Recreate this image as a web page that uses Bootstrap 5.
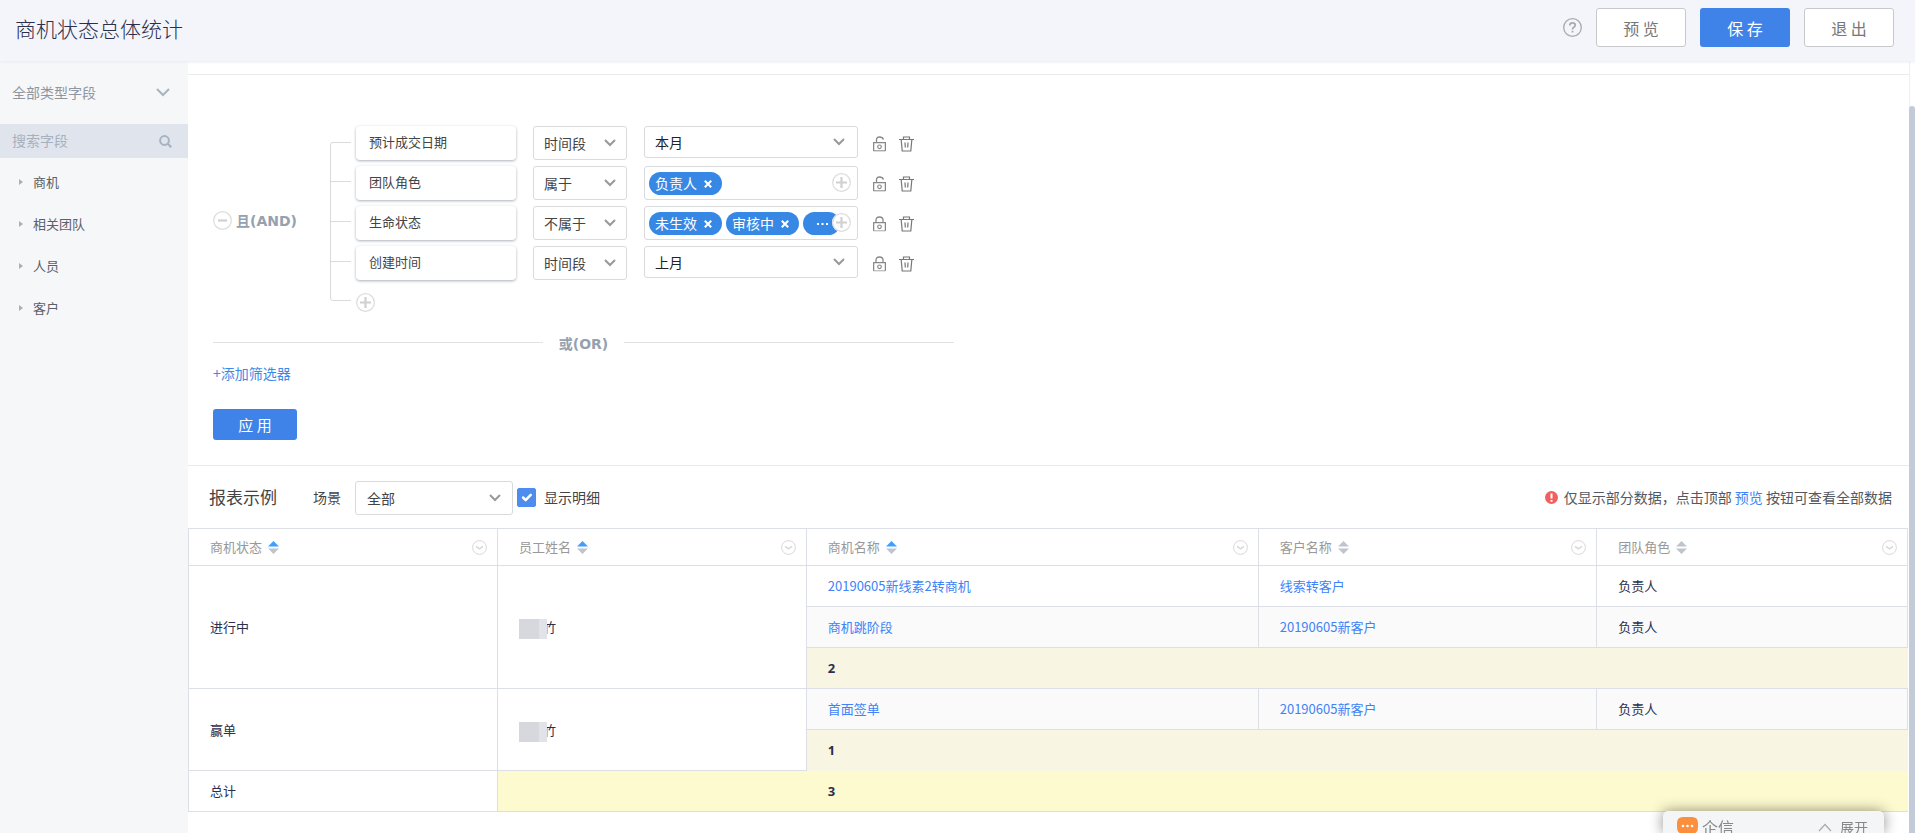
<!DOCTYPE html>
<html lang="zh-CN">
<head>
<meta charset="utf-8">
<meta name="viewport" content="width=device-width, initial-scale=1">
<title>商机状态总体统计</title>
<link rel="stylesheet" href="https://cdn.jsdelivr.net/npm/bootstrap@5.3.0/dist/css/bootstrap.min.css">
<style>
body{font-family:"Noto Sans CJK SC",sans-serif;font-size:14px;line-height:20px;color:#444;font-weight:400}
.latin-bold{font-family:"DejaVu Sans","Noto Sans CJK SC",sans-serif;font-weight:700;font-size:14px;color:#95a1af}
.app-head{height:61px;background:#f4f5fa;padding:8px 21px 14px 15px;gap:14px;box-shadow:0 1px 3px #e9ebf0;z-index:2}
.app-head h1{font-size:21px;line-height:30px;color:#2b2f4e;font-weight:300}
.btn-top{width:90px;height:39px;border-radius:3px;padding:0;font-size:16px;line-height:24px;background:#fff;border:1px solid #c8c9cc;color:#777}
.btn-save,.btn-apply{background:#4083e8;border:0;color:#fff}
.btn-apply{width:84px;height:31px;border-radius:3px;padding:0;font-size:15px;line-height:20px;margin-left:25px}
.icon-btn{background:none;border:0;padding:0;line-height:0;display:block}
.side{width:188px;background:#f6f7f9;flex:none}
.side-type{height:63px;padding:0 17px 2px 12px;color:#9095a0}
.side-search{height:34px;background:#e0e5ed;padding:0 16px 0 12px}
.side-search input{background:none;border:0;padding:0 0 2px;width:100%;outline:0;font-size:14px}
.side-search input::placeholder{color:#a7b0bd;opacity:1}
.side-list{padding-top:3px}
.side-list a{height:42px;gap:10px;padding-left:19px;font-size:13px;color:#5c6069;text-decoration:none}
.top-gap{height:14px;border-bottom:1px solid #ebecee}
.rules{padding:50px 0 0 25px}
.rule-and{width:117px;padding-top:4px}
.tree{width:26px;height:159px;margin-top:17px;align-self:flex-start}
.rule-row{height:40px}
.field-box{width:160px;height:34px;border-radius:4px;padding:0 13px;font-size:13px;line-height:32px;margin-top:1px;box-shadow:0 1px 3px #aab0b8}
.sel{border:1px solid #d9dadc;border-radius:3px;background-color:#fff;background-repeat:no-repeat;background-image:url("data:image/svg+xml,%3Csvg xmlns='http://www.w3.org/2000/svg' width='14' height='10'%3E%3Cpath d='M2 2l5 5 5-5' fill='none' stroke='%23999' stroke-width='2'/%3E%3C/svg%3E");appearance:none;height:34px;padding:0 10px;font-size:14px;color:#444}
.sel-op{width:94px;background-position:right 9px center;margin:1px 17px 0}
.sel-val{width:214px;height:32px;background-position:right 11px center;color:#222;margin-top:1px}
.tagbox{width:214px;height:34px;border:1px solid #d9dadc;border-radius:3px;padding:5px 4px;gap:4px;margin-top:1px}
.chip{height:23px;border-radius:12px;background:#3788e5;color:#fff;padding:0 10px 0 6px;gap:7px;line-height:23px;white-space:nowrap;flex:none}
.chip-more{padding:0 12px 0 14px}
.tagbox .icon-btn{position:absolute;right:6px;top:6px;background:#fff;border-radius:50%}
.acts{gap:13px;padding:11px 0 0 15px}
.or-row{width:741px;margin:22px 0 0 25px;gap:16px;height:20px}
.or-row hr{margin:0 0 4px;flex:1;border-color:#e0e2e4;opacity:1}
.add-link{color:#3c8be6;text-decoration:none;margin:9px 0 26px 25px}
.sample-bar{border-top:1px solid #e8e9eb;margin-top:25px;padding:0 17px 0 21px;height:63px}
.sample-bar h2{font-size:17px;line-height:24px;font-weight:400;width:104px}
.sel-scene{width:158px;background-position:right 10px center;margin:2px 4px 0 14px;padding-left:11px}
.sample-bar .tick{width:19px;height:19px;margin:0 8px 0 0;border-radius:2px}
.tick:checked{background-color:#4e8cee;border-color:#4e8cee}
.hint{color:#545861}
.hint a,.grid a{color:#4083f8;text-decoration:none}
.grid{margin:0;table-layout:fixed;font-size:13px;line-height:20px;width:calc(100% - 1px);color:#2b2f4e;border-collapse:collapse}
.grid th,.grid td{height:41px;padding:0 10px 0 21px;border:1px solid #dcdfe6;vertical-align:middle;font-weight:400}
.grid th{height:37px;color:#999}
.grid .alt td.shade{background:#fafafb}
.grid td.sub,.grid td.total{font-weight:700;font-family:"Noto Sans","Noto Sans CJK SC",sans-serif}
.grid td.sub{background:#f9f5e3;border-bottom-color:#f9f5e3;border-right-color:#f9f5e3}
.grid td.sub.mid{border-bottom-color:#dcdfe6}
.grid td.total{background:#fefacf;border-top-color:#fefacf;border-right-color:#fefacf}
.sorter{margin-left:6px}
.veil{width:20px;height:20px;background:#d7d8de;box-shadow:8px 0 0 #e2e3e8;margin:4px 4px 0 0}
.track{width:6px;flex:none;border-left:1px solid #eceef1;padding-top:45px}
.thumb{height:100%;background:#c3cad8;border-radius:3px 3px 0 0;margin-left:-1px}
.chatbar{position:fixed;right:31px;bottom:0;width:221px;height:22px;background:#f4f5f7;border-radius:5px 5px 0 0;box-shadow:0 0 14px rgba(0,0,0,.45);padding:6px 16px 0 14px;color:#888}
.chatbar span{line-height:20px}
</style>
<script src="https://cdn.jsdelivr.net/npm/bootstrap@5.3.0/dist/js/bootstrap.bundle.min.js"></script>
</head>
<body class="vh-100 overflow-hidden d-flex flex-column">
<svg class="d-none">
<symbol id="plus" viewBox="0 0 19 19"><circle cx="9.500" cy="9.500" r="8.800" fill="none" stroke="#dcdcdc" stroke-width="1.200"/><path d="M9.500 4v11M4 9.500h11" stroke="#d0d0d0" stroke-width="2.200"/></symbol>
<symbol id="minus" viewBox="0 0 19 19"><circle cx="9.500" cy="9.500" r="8.800" fill="none" stroke="#dcdcdc" stroke-width="1.200"/><path d="M5 9.500h9" stroke="#d0d0d0" stroke-width="2.200"/></symbol>
<symbol id="unlock" viewBox="0 0 13 16"><path d="M.6 15V6.600h11.800V15M3.500 6.600V3.800Q3.500 1 6.500 1Q9.500 1 10.500 3.400" fill="none" stroke="#888" stroke-width="1.300"/><path d="M.6 14.800h11.800" stroke="#888"/><circle cx="6.500" cy="10.800" r="1.800" fill="none" stroke="#888" stroke-width="1.200"/></symbol>
<symbol id="lock" viewBox="0 0 13 16"><path d="M.6 15V6.600h11.800V15M3 6.600V4.200Q3 1 6.500 1Q10 1 10 4.200V6.600" fill="none" stroke="#888" stroke-width="1.300"/><path d="M.6 14.800h11.800" stroke="#aaa"/><circle cx="6.500" cy="10.800" r="1.800" fill="none" stroke="#888" stroke-width="1.200"/></symbol>
<symbol id="trash" viewBox="0 0 15 16"><path d="M0 3.500h15M4.500 3V1h6v2M2.200 4l1 11h8.600l1-11M6 6.500l.3 5M9 6.500l-.3 5" fill="none" stroke="#777" stroke-width="1.200"/></symbol>
<symbol id="drop" viewBox="0 0 15 15"><circle cx="7.500" cy="7.500" r="6.900" fill="none" stroke="#d8d8d8"/><path d="M4 6.300l3.500 2.500L11 6.300" fill="none" stroke="#d8d8d8" stroke-width="1.500"/></symbol>
<symbol id="sort-on" viewBox="0 0 11 13"><path d="M0 5.500L5.500 0 11 5.500z" fill="#409eff"/><path d="M0 7.500h11L5.500 13z" fill="#c0c4cc"/></symbol>
<symbol id="sort" viewBox="0 0 11 13"><path d="M0 5.500L5.500 0 11 5.500zM0 7.500h11L5.500 13z" fill="#c0c4cc"/></symbol>
<symbol id="x" viewBox="0 0 8 8"><path d="M.8.8l6.400 6.400M7.200.8L.8 7.200" stroke="#fff" stroke-width="2"/></symbol>
<symbol id="tri" viewBox="0 0 4 6"><path d="M0 0l4 3-4 3z" fill="#a7b0bd"/></symbol>
</svg>

<header class="app-head d-flex align-items-center position-relative flex-shrink-0">
<h1 class="mb-0 me-auto">商机状态总体统计</h1>
<button class="icon-btn" aria-label="帮助"><svg width="19" height="19" viewBox="0 0 19 19"><circle cx="9.500" cy="9.500" r="8.800" fill="none" stroke="#aaa" stroke-width="1.300"/><path d="M6.800 7.500Q6.800 4.800 9.500 4.800Q12.200 4.800 12.200 7.200Q12.200 8.500 10.500 9.500Q9.500 10.200 9.500 11.500M9.500 12.800v1.800" fill="none" stroke="#aaa" stroke-width="1.700"/></svg></button>
<button class="btn btn-top">预 览</button>
<button class="btn btn-top btn-save">保 存</button>
<button class="btn btn-top">退 出</button>
</header>

<div class="d-flex flex-grow-1 overflow-hidden">
<aside class="side">
<button class="icon-btn side-type d-flex align-items-center justify-content-between w-100">全部类型字段<svg width="16" height="10" viewBox="0 0 16 10"><path d="M2 2l6 6 6-6" fill="none" stroke="#a9b5bf" stroke-width="2"/></svg></button>
<div class="side-search d-flex align-items-center"><input type="text" placeholder="搜索字段" aria-label="搜索字段"><svg class="flex-shrink-0" width="13" height="13" viewBox="0 0 13 13"><circle cx="5.500" cy="5.500" r="4.400" fill="none" stroke="#a7b3c0" stroke-width="2"/><path d="M8.800 8.800l3.500 3.500" stroke="#a7b3c0" stroke-width="2.200"/></svg></div>
<nav class="side-list">
<a href="#" class="d-flex align-items-center"><svg width="4" height="6"><use href="#tri"/></svg>商机</a>
<a href="#" class="d-flex align-items-center"><svg width="4" height="6"><use href="#tri"/></svg>相关团队</a>
<a href="#" class="d-flex align-items-center"><svg width="4" height="6"><use href="#tri"/></svg>人员</a>
<a href="#" class="d-flex align-items-center"><svg width="4" height="6"><use href="#tri"/></svg>客户</a>
</nav>
</aside>

<main class="flex-grow-1 overflow-hidden">
<div class="top-gap"></div>
<section class="rules d-flex">
<div class="rule-and d-flex align-items-center gap-1"><button class="icon-btn" aria-label="删除条件组"><svg width="19" height="19"><use href="#minus"/></svg></button><span class="latin-bold">且(AND)</span></div>
<svg class="tree" viewBox="0 0 26 159"><path d="M21 .5H3Q.5.500.5 3V156Q.5 158.500 3 158.500H21M.5 39.500H21M.5 79.500H21M.5 119.500H21" fill="none" stroke="#d9dadc"/></svg>
<div>
<div class="rule-row d-flex align-items-start">
<div class="field-box">预计成交日期</div>
<select class="sel sel-op" aria-label="条件"><option>时间段</option></select>
<select class="sel sel-val" aria-label="值"><option>本月</option></select>
<div class="acts d-flex"><button class="icon-btn" aria-label="锁定"><svg width="13" height="16"><use href="#unlock"/></svg></button><button class="icon-btn" aria-label="删除"><svg width="15" height="16"><use href="#trash"/></svg></button></div>
</div>
<div class="rule-row d-flex align-items-start">
<div class="field-box">团队角色</div>
<select class="sel sel-op" aria-label="条件"><option>属于</option></select>
<div class="tagbox d-flex position-relative"><span class="chip d-flex align-items-center">负责人<svg width="8" height="8"><use href="#x"/></svg></span><button class="icon-btn" aria-label="添加"><svg width="19" height="19"><use href="#plus"/></svg></button></div>
<div class="acts d-flex"><button class="icon-btn" aria-label="锁定"><svg width="13" height="16"><use href="#unlock"/></svg></button><button class="icon-btn" aria-label="删除"><svg width="15" height="16"><use href="#trash"/></svg></button></div>
</div>
<div class="rule-row d-flex align-items-start">
<div class="field-box">生命状态</div>
<select class="sel sel-op" aria-label="条件"><option>不属于</option></select>
<div class="tagbox d-flex position-relative"><span class="chip d-flex align-items-center">未生效<svg width="8" height="8"><use href="#x"/></svg></span><span class="chip d-flex align-items-center">审核中<svg width="8" height="8"><use href="#x"/></svg></span><span class="chip chip-more d-flex align-items-center"><svg width="11" height="2" viewBox="0 0 11 2"><path d="M0 0h2v2H0zM4.500 0h2v2h-2zM9 0h2v2H9z" fill="#fff"/></svg></span><button class="icon-btn" aria-label="添加"><svg width="19" height="19"><use href="#plus"/></svg></button></div>
<div class="acts d-flex"><button class="icon-btn" aria-label="解锁"><svg width="13" height="16"><use href="#lock"/></svg></button><button class="icon-btn" aria-label="删除"><svg width="15" height="16"><use href="#trash"/></svg></button></div>
</div>
<div class="rule-row d-flex align-items-start">
<div class="field-box">创建时间</div>
<select class="sel sel-op" aria-label="条件"><option>时间段</option></select>
<select class="sel sel-val" aria-label="值"><option>上月</option></select>
<div class="acts d-flex"><button class="icon-btn" aria-label="解锁"><svg width="13" height="16"><use href="#lock"/></svg></button><button class="icon-btn" aria-label="删除"><svg width="15" height="16"><use href="#trash"/></svg></button></div>
</div>
<button class="icon-btn mt-2" aria-label="添加条件"><svg width="19" height="19"><use href="#plus"/></svg></button>
</div>
</section>
<div class="or-row d-flex align-items-center"><hr><span class="latin-bold">或(OR)</span><hr></div>
<a href="#" class="add-link d-block">+添加筛选器</a>
<button class="btn btn-apply">应 用</button>
<div class="sample-bar d-flex align-items-center">
<h2 class="mb-0">报表示例</h2>
<label for="scene">场景</label>
<select id="scene" class="sel sel-scene"><option>全部</option></select>
<input type="checkbox" class="form-check-input tick" id="detail" checked><label for="detail">显示明细</label>
<div class="hint ms-auto d-flex align-items-center"><svg class="me-1" width="15" height="13" viewBox="0 0 15 13"><circle cx="6.500" cy="6.500" r="6.500" fill="#f16060"/><path d="M6.500 2.500v5M6.500 9v1.800" stroke="#fff" stroke-width="2"/></svg><span>仅显示部分数据，点击顶部 <a href="#">预览</a> 按钮可查看全部数据</span></div>
</div>
<table class="grid">
<colgroup><col style="width:17.970%"><col style="width:17.970%"><col style="width:26.290%"><col style="width:19.700%"><col></colgroup>
<thead><tr>
<th><div class="d-flex align-items-center"><span>商机状态</span><svg class="sorter" width="11" height="13"><use href="#sort-on"/></svg><button class="icon-btn ms-auto" aria-label="更多"><svg width="15" height="15"><use href="#drop"/></svg></button></div></th>
<th><div class="d-flex align-items-center"><span>员工姓名</span><svg class="sorter" width="11" height="13"><use href="#sort-on"/></svg><button class="icon-btn ms-auto" aria-label="更多"><svg width="15" height="15"><use href="#drop"/></svg></button></div></th>
<th><div class="d-flex align-items-center"><span>商机名称</span><svg class="sorter" width="11" height="13"><use href="#sort-on"/></svg><button class="icon-btn ms-auto" aria-label="更多"><svg width="15" height="15"><use href="#drop"/></svg></button></div></th>
<th><div class="d-flex align-items-center"><span>客户名称</span><svg class="sorter" width="11" height="13"><use href="#sort"/></svg><button class="icon-btn ms-auto" aria-label="更多"><svg width="15" height="15"><use href="#drop"/></svg></button></div></th>
<th><div class="d-flex align-items-center"><span>团队角色</span><svg class="sorter" width="11" height="13"><use href="#sort"/></svg><button class="icon-btn ms-auto" aria-label="更多"><svg width="15" height="15"><use href="#drop"/></svg></button></div></th>
</tr></thead>
<tbody>
<tr><td rowspan="3">进行中</td><td rowspan="3"><div class="d-flex align-items-center"><span class="veil position-relative"></span>竹</div></td><td><a href="#">20190605新线素2转商机</a></td><td><a href="#">线索转客户</a></td><td>负责人</td></tr>
<tr class="alt"><td class="shade"><a href="#">商机跳阶段</a></td><td class="shade"><a href="#">20190605新客户</a></td><td class="shade">负责人</td></tr>
<tr><td class="sub mid" colspan="3">2</td></tr>
<tr class="alt"><td rowspan="2">赢单</td><td rowspan="2"><div class="d-flex align-items-center"><span class="veil position-relative"></span>竹</div></td><td class="shade"><a href="#">首面签单</a></td><td class="shade"><a href="#">20190605新客户</a></td><td class="shade">负责人</td></tr>
<tr><td class="sub" colspan="3">1</td></tr>
<tr><td>总计</td><td class="total"></td><td class="total" colspan="3">3</td></tr>
</tbody>
</table>
</main>
<div class="track"><div class="thumb"></div></div>
</div>

<div class="chatbar d-flex align-items-start">
<svg width="21" height="20" viewBox="0 0 21 20"><path d="M6 0h9q6 0 6 6v4q0 7-6 7H9l-4 3v-3Q0 16 0 10V6Q0 0 6 0z" fill="#fb8f3d"/><circle cx="6" cy="9" r="1.300" fill="#fff"/><circle cx="10.500" cy="9" r="1.300" fill="#fff"/><circle cx="15" cy="9" r="1.300" fill="#fff"/></svg>
<span class="fs-6 ms-1 me-auto">企信</span>
<svg class="mt-1 me-2" width="14" height="14" viewBox="0 0 14 14"><path d="M1 10l6-6.500 6 6.500" fill="none" stroke="#aaa" stroke-width="1.200"/></svg>
<span>展开</span>
</div>
</body>
</html>
